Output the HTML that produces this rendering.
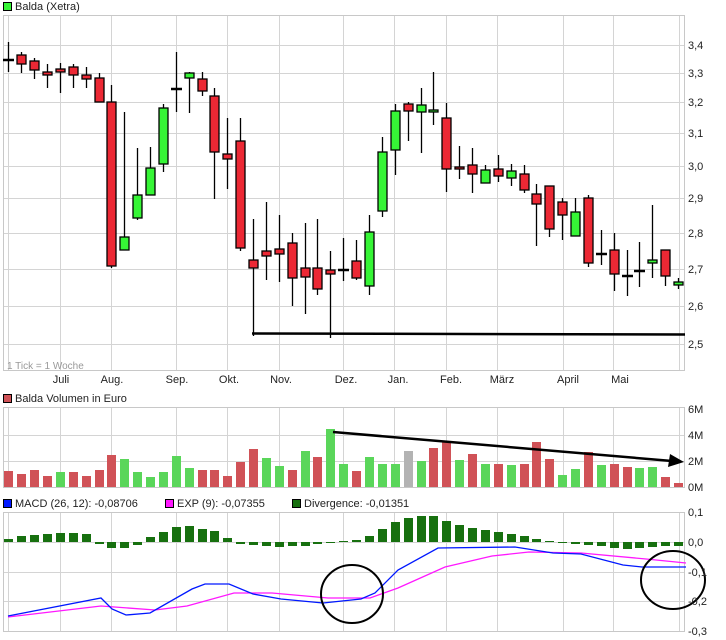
<!DOCTYPE html>
<html><head><meta charset="utf-8"><style>
html,body{margin:0;padding:0;background:#fff;width:726px;height:640px;overflow:hidden}
svg{display:block}
text{font-family:"Liberation Sans",sans-serif;font-size:11px;fill:#222}
</style></head><body>
<svg width="726" height="640" viewBox="0 0 726 640" xmlns="http://www.w3.org/2000/svg">
<!-- title -->
<rect x="3.5" y="2.5" width="8" height="8" fill="#36f536" stroke="#000"/>
<text x="15" y="10" style="font-size:11px">Balda (Xetra)</text>

<!-- PRICE PANEL grid -->
<g stroke="#d4d4d4" stroke-width="1">
<line x1="3" y1="45.5" x2="685" y2="45.5"/><line x1="3" y1="73.5" x2="685" y2="73.5"/>
<line x1="3" y1="102.5" x2="685" y2="102.5"/><line x1="3" y1="133.5" x2="685" y2="133.5"/>
<line x1="3" y1="166.5" x2="685" y2="166.5"/><line x1="3" y1="198.5" x2="685" y2="198.5"/>
<line x1="3" y1="233.5" x2="685" y2="233.5"/><line x1="3" y1="269.5" x2="685" y2="269.5"/>
<line x1="3" y1="306.5" x2="685" y2="306.5"/><line x1="3" y1="344.5" x2="685" y2="344.5"/>
<g id="vg">
<line x1="8.5" y1="15" x2="8.5" y2="371"/><line x1="60.5" y1="15" x2="60.5" y2="371"/>
<line x1="111.5" y1="15" x2="111.5" y2="371"/><line x1="176.5" y1="15" x2="176.5" y2="371"/>
<line x1="227.5" y1="15" x2="227.5" y2="371"/><line x1="279.5" y1="15" x2="279.5" y2="371"/>
<line x1="343.5" y1="15" x2="343.5" y2="371"/><line x1="394.5" y1="15" x2="394.5" y2="371"/>
<line x1="446.5" y1="15" x2="446.5" y2="371"/><line x1="497.5" y1="15" x2="497.5" y2="371"/>
<line x1="563.5" y1="15" x2="563.5" y2="371"/><line x1="613.5" y1="15" x2="613.5" y2="371"/>
<line x1="679.5" y1="15" x2="679.5" y2="371"/>
</g>
</g>
<rect x="3.5" y="15.5" width="681" height="355" fill="none" stroke="#c8c8c8"/>

<!-- candles -->
<g stroke="#000" stroke-width="1.3">
<line x1="8.5" y1="42" x2="8.5" y2="72"/><line x1="21.5" y1="52" x2="21.5" y2="73"/><line x1="34.5" y1="58" x2="34.5" y2="79"/>
<line x1="47.5" y1="64" x2="47.5" y2="88"/><line x1="60.5" y1="63" x2="60.5" y2="93"/><line x1="73.5" y1="64" x2="73.5" y2="88"/>
<line x1="86.5" y1="67" x2="86.5" y2="88"/><line x1="99.5" y1="73" x2="99.5" y2="102"/><line x1="111.5" y1="85" x2="111.5" y2="268"/>
<line x1="124.5" y1="112" x2="124.5" y2="250"/><line x1="137.5" y1="148" x2="137.5" y2="220"/><line x1="150.5" y1="147" x2="150.5" y2="195"/>
<line x1="163.5" y1="104" x2="163.5" y2="172"/><line x1="176.5" y1="52" x2="176.5" y2="112"/><line x1="189.5" y1="72" x2="189.5" y2="113"/>
<line x1="202.5" y1="72" x2="202.5" y2="96"/><line x1="214.5" y1="88" x2="214.5" y2="199"/><line x1="227.5" y1="118" x2="227.5" y2="189"/>
<line x1="240.5" y1="118" x2="240.5" y2="251"/><line x1="253.5" y1="219" x2="253.5" y2="336"/><line x1="266.5" y1="202" x2="266.5" y2="280"/>
<line x1="279.5" y1="215" x2="279.5" y2="282"/><line x1="292.5" y1="233" x2="292.5" y2="306"/><line x1="305.5" y1="223" x2="305.5" y2="314"/>
<line x1="317.5" y1="219" x2="317.5" y2="295"/><line x1="330.5" y1="251" x2="330.5" y2="338"/><line x1="343.5" y1="238" x2="343.5" y2="281"/>
<line x1="356.5" y1="240" x2="356.5" y2="280"/><line x1="369.5" y1="215" x2="369.5" y2="295"/><line x1="382.5" y1="137" x2="382.5" y2="217"/>
<line x1="395.5" y1="104" x2="395.5" y2="175"/><line x1="408.5" y1="102" x2="408.5" y2="141"/><line x1="421.5" y1="88" x2="421.5" y2="153"/>
<line x1="433.5" y1="72" x2="433.5" y2="125"/><line x1="446.5" y1="103" x2="446.5" y2="192"/><line x1="459.5" y1="146" x2="459.5" y2="179"/>
<line x1="472.5" y1="148" x2="472.5" y2="193"/><line x1="485.5" y1="165" x2="485.5" y2="183"/><line x1="498.5" y1="155" x2="498.5" y2="182"/>
<line x1="511.5" y1="164" x2="511.5" y2="186"/><line x1="524.5" y1="165" x2="524.5" y2="193"/><line x1="536.5" y1="184" x2="536.5" y2="246"/>
<line x1="549.5" y1="186" x2="549.5" y2="237"/><line x1="562.5" y1="198" x2="562.5" y2="240"/><line x1="575.5" y1="198" x2="575.5" y2="236"/>
<line x1="588.5" y1="195" x2="588.5" y2="267"/><line x1="601.5" y1="230" x2="601.5" y2="265"/><line x1="614.5" y1="233" x2="614.5" y2="291"/>
<line x1="627.5" y1="250" x2="627.5" y2="296"/><line x1="639.5" y1="242" x2="639.5" y2="287"/><line x1="652.5" y1="205" x2="652.5" y2="278"/>
<line x1="665.5" y1="250" x2="665.5" y2="286"/><line x1="678.5" y1="278" x2="678.5" y2="289"/>
</g>
<g stroke="#000" stroke-width="2.5">
<line x1="3" y1="60" x2="14" y2="60"/><line x1="171" y1="89" x2="182" y2="89"/><line x1="338" y1="270" x2="349" y2="270"/>
<line x1="596" y1="254" x2="607" y2="254"/><line x1="622" y1="276" x2="633" y2="276"/><line x1="634" y1="271" x2="645" y2="271"/>
</g>
<g stroke="#000" stroke-width="1.3" fill="#ec2834">
<rect x="17" y="55" width="9" height="9"/><rect x="30" y="61" width="9" height="9"/><rect x="43" y="72" width="9" height="3"/>
<rect x="56" y="69" width="9" height="3"/><rect x="69" y="67" width="9" height="8"/><rect x="82" y="75" width="9" height="4"/>
<rect x="95" y="78" width="9" height="24"/><rect x="107" y="102" width="9" height="164"/><rect x="198" y="79" width="9" height="12"/>
<rect x="210" y="96" width="9" height="56"/><rect x="223" y="154" width="9" height="5"/><rect x="236" y="141" width="9" height="107"/>
<rect x="249" y="260" width="9" height="8"/><rect x="262" y="251" width="9" height="5"/><rect x="275" y="249" width="9" height="5"/>
<rect x="288" y="243" width="9" height="35"/><rect x="301" y="268" width="9" height="9"/><rect x="313" y="268" width="9" height="21"/>
<rect x="326" y="270" width="9" height="4"/><rect x="352" y="261" width="9" height="17"/><rect x="404" y="104" width="9" height="7"/>
<rect x="442" y="118" width="9" height="51"/><rect x="455" y="167" width="9" height="2"/><rect x="468" y="165" width="9" height="9"/>
<rect x="494" y="169" width="9" height="7"/><rect x="520" y="174" width="9" height="16"/><rect x="532" y="194" width="9" height="10"/>
<rect x="545" y="186" width="9" height="43"/><rect x="558" y="202" width="9" height="13"/><rect x="584" y="198" width="9" height="65"/>
<rect x="610" y="250" width="9" height="24"/><rect x="661" y="250" width="9" height="26"/>
</g>
<g stroke="#000" stroke-width="1.3" fill="#36f536">
<rect x="120" y="237" width="9" height="13"/><rect x="133" y="195" width="9" height="23"/><rect x="146" y="168" width="9" height="27"/>
<rect x="159" y="108" width="9" height="56"/><rect x="185" y="73" width="9" height="5"/><rect x="365" y="232" width="9" height="54"/>
<rect x="378" y="152" width="9" height="59"/><rect x="391" y="111" width="9" height="39"/><rect x="417" y="105" width="9" height="7"/>
<rect x="429" y="110" width="9" height="2"/><rect x="481" y="170" width="9" height="13"/><rect x="507" y="171" width="9" height="7"/>
<rect x="571" y="212" width="9" height="24"/><rect x="648" y="260" width="9" height="3"/><rect x="674" y="282" width="9" height="3"/>
</g>
<line x1="252" y1="333.5" x2="685" y2="334.5" stroke="#000" stroke-width="2.5"/>

<!-- price axis -->
<g>
<text x="688" y="49">3,4</text><text x="688" y="77">3,3</text><text x="688" y="106">3,2</text>
<text x="688" y="137">3,1</text><text x="688" y="170">3,0</text><text x="688" y="202">2,9</text>
<text x="688" y="237">2,8</text><text x="688" y="273">2,7</text><text x="688" y="310">2,6</text>
<text x="688" y="348">2,5</text>
</g>
<text x="7" y="369" style="fill:#999;font-size:10px">1 Tick = 1 Woche</text>
<g text-anchor="middle">
<text x="61" y="383">Juli</text><text x="112" y="383">Aug.</text><text x="177" y="383">Sep.</text>
<text x="229" y="383">Okt.</text><text x="281" y="383">Nov.</text><text x="346" y="383">Dez.</text>
<text x="398" y="383">Jan.</text><text x="451" y="383">Feb.</text><text x="502" y="383">März</text>
<text x="568" y="383">April</text><text x="620" y="383">Mai</text>
</g>

<!-- VOLUME -->
<rect x="3.5" y="394.5" width="8" height="8" fill="#d05257" stroke="#000"/>
<text x="15" y="402">Balda Volumen in Euro</text>
<g stroke="#d4d4d4">
<line x1="3" y1="435.5" x2="685" y2="435.5"/><line x1="3" y1="461.5" x2="685" y2="461.5"/>
<g transform="translate(0,0)">
<line x1="8.5" y1="407" x2="8.5" y2="487"/><line x1="60.5" y1="407" x2="60.5" y2="487"/><line x1="111.5" y1="407" x2="111.5" y2="487"/>
<line x1="176.5" y1="407" x2="176.5" y2="487"/><line x1="227.5" y1="407" x2="227.5" y2="487"/><line x1="279.5" y1="407" x2="279.5" y2="487"/>
<line x1="343.5" y1="407" x2="343.5" y2="487"/><line x1="394.5" y1="407" x2="394.5" y2="487"/><line x1="446.5" y1="407" x2="446.5" y2="487"/>
<line x1="497.5" y1="407" x2="497.5" y2="487"/><line x1="563.5" y1="407" x2="563.5" y2="487"/><line x1="613.5" y1="407" x2="613.5" y2="487"/>
<line x1="679.5" y1="407" x2="679.5" y2="487"/>
</g>
</g>
<rect x="3.5" y="407.5" width="681" height="80" fill="none" stroke="#c8c8c8"/>
<g fill="#d05257">
<rect x="4" y="471" width="9" height="16"/><rect x="17" y="474" width="9" height="13"/><rect x="30" y="470" width="9" height="17"/>
<rect x="43" y="476" width="9" height="11"/><rect x="69" y="472" width="9" height="15"/><rect x="82" y="476" width="9" height="11"/>
<rect x="95" y="470" width="9" height="17"/><rect x="107" y="455" width="9" height="32"/><rect x="198" y="470" width="9" height="17"/>
<rect x="210" y="470" width="9" height="17"/><rect x="223" y="476" width="9" height="11"/><rect x="236" y="462" width="9" height="25"/>
<rect x="249" y="449" width="9" height="38"/><rect x="288" y="470" width="9" height="17"/><rect x="313" y="457" width="9" height="30"/>
<rect x="352" y="471" width="9" height="16"/><rect x="429" y="448" width="9" height="39"/><rect x="442" y="442" width="9" height="45"/>
<rect x="468" y="454" width="9" height="33"/><rect x="494" y="464" width="9" height="23"/><rect x="520" y="464" width="9" height="23"/>
<rect x="532" y="442" width="9" height="45"/><rect x="545" y="459" width="9" height="28"/><rect x="584" y="452" width="9" height="35"/>
<rect x="610" y="464" width="9" height="23"/><rect x="623" y="467" width="9" height="20"/><rect x="661" y="477" width="9" height="10"/>
<rect x="674" y="483" width="9" height="4"/>
</g>
<g fill="#5ad65a">
<rect x="56" y="472" width="9" height="15"/><rect x="120" y="459" width="9" height="28"/><rect x="133" y="472" width="9" height="15"/>
<rect x="146" y="477" width="9" height="10"/><rect x="159" y="472" width="9" height="15"/><rect x="172" y="456" width="9" height="31"/>
<rect x="185" y="468" width="9" height="19"/><rect x="262" y="458" width="9" height="29"/><rect x="275" y="466" width="9" height="21"/>
<rect x="301" y="451" width="9" height="36"/><rect x="326" y="429" width="9" height="58"/><rect x="339" y="464" width="9" height="23"/>
<rect x="365" y="457" width="9" height="30"/><rect x="378" y="464" width="9" height="23"/><rect x="391" y="464" width="9" height="23"/>
<rect x="417" y="461" width="9" height="26"/><rect x="455" y="460" width="9" height="27"/><rect x="481" y="464" width="9" height="23"/>
<rect x="507" y="465" width="9" height="22"/><rect x="558" y="475" width="9" height="12"/><rect x="571" y="469" width="9" height="18"/>
<rect x="597" y="465" width="9" height="22"/><rect x="635" y="468" width="9" height="19"/><rect x="648" y="467" width="9" height="20"/>
</g>
<rect x="404" y="451" width="9" height="36" fill="#b3b3b3"/>
<line x1="333" y1="432" x2="672" y2="461" stroke="#000" stroke-width="2.5"/>
<polygon points="684,462 670,454 668,467" fill="#000"/>
<text x="688" y="413">6M</text><text x="688" y="439">4M</text><text x="688" y="465">2M</text><text x="688" y="491">0M</text>

<!-- MACD -->
<rect x="3.5" y="499.5" width="8" height="8" fill="#0018ff" stroke="#000"/>
<text x="15" y="507">MACD (26, 12): -0,08706</text>
<rect x="165.5" y="499.5" width="8" height="8" fill="#ff18ff" stroke="#000"/>
<text x="177" y="507">EXP (9): -0,07355</text>
<rect x="292.5" y="499.5" width="8" height="8" fill="#17700f" stroke="#000"/>
<text x="304" y="507">Divergence: -0,01351</text>
<g stroke="#d4d4d4">
<line x1="3" y1="542.5" x2="685" y2="542.5"/><line x1="3" y1="572.5" x2="685" y2="572.5"/><line x1="3" y1="601.5" x2="685" y2="601.5"/>
<line x1="8.5" y1="512" x2="8.5" y2="631"/><line x1="60.5" y1="512" x2="60.5" y2="631"/><line x1="111.5" y1="512" x2="111.5" y2="631"/>
<line x1="176.5" y1="512" x2="176.5" y2="631"/><line x1="227.5" y1="512" x2="227.5" y2="631"/><line x1="279.5" y1="512" x2="279.5" y2="631"/>
<line x1="343.5" y1="512" x2="343.5" y2="631"/><line x1="394.5" y1="512" x2="394.5" y2="631"/><line x1="446.5" y1="512" x2="446.5" y2="631"/>
<line x1="497.5" y1="512" x2="497.5" y2="631"/><line x1="563.5" y1="512" x2="563.5" y2="631"/><line x1="613.5" y1="512" x2="613.5" y2="631"/>
<line x1="679.5" y1="512" x2="679.5" y2="631"/>
</g>
<rect x="3.5" y="512.5" width="681" height="119" fill="none" stroke="#c8c8c8"/>
<g fill="#17700f">
<rect x="4" y="539" width="9" height="3"/><rect x="17" y="536" width="9" height="6"/><rect x="30" y="535" width="9" height="7"/>
<rect x="43" y="534" width="9" height="8"/><rect x="56" y="533" width="9" height="9"/><rect x="69" y="533" width="9" height="9"/>
<rect x="82" y="534" width="9" height="8"/><rect x="95" y="542" width="9" height="2"/><rect x="107" y="542" width="9" height="6"/>
<rect x="120" y="542" width="9" height="6"/><rect x="133" y="542" width="9" height="3"/><rect x="146" y="537" width="9" height="5"/>
<rect x="159" y="532" width="9" height="10"/><rect x="172" y="527" width="9" height="15"/><rect x="185" y="526" width="9" height="16"/>
<rect x="198" y="529" width="9" height="13"/><rect x="210" y="531" width="9" height="11"/><rect x="223" y="538" width="9" height="4"/>
<rect x="236" y="542" width="9" height="2"/><rect x="249" y="542" width="9" height="3"/><rect x="262" y="542" width="9" height="4"/>
<rect x="275" y="542" width="9" height="5"/><rect x="288" y="542" width="9" height="4"/><rect x="301" y="542" width="9" height="4"/>
<rect x="313" y="542" width="9" height="2"/><rect x="326" y="542" width="9" height="1"/><rect x="339" y="541" width="9" height="1"/>
<rect x="352" y="540" width="9" height="2"/><rect x="365" y="536" width="9" height="6"/><rect x="378" y="529" width="9" height="13"/>
<rect x="391" y="522" width="9" height="20"/><rect x="404" y="518" width="9" height="24"/><rect x="417" y="516" width="9" height="26"/>
<rect x="429" y="516" width="9" height="26"/><rect x="442" y="521" width="9" height="21"/><rect x="455" y="525" width="9" height="17"/>
<rect x="468" y="528" width="9" height="14"/><rect x="481" y="530" width="9" height="12"/><rect x="494" y="532" width="9" height="10"/>
<rect x="507" y="534" width="9" height="8"/><rect x="520" y="536" width="9" height="6"/><rect x="532" y="539" width="9" height="3"/>
<rect x="545" y="541" width="9" height="1"/><rect x="558" y="542" width="9" height="1"/><rect x="571" y="542" width="9" height="2"/>
<rect x="584" y="542" width="9" height="3"/><rect x="597" y="542" width="9" height="4"/><rect x="610" y="542" width="9" height="6"/>
<rect x="623" y="542" width="9" height="7"/><rect x="635" y="542" width="9" height="6"/><rect x="648" y="542" width="9" height="5"/>
<rect x="661" y="542" width="9" height="4"/><rect x="674" y="542" width="9" height="4"/>
</g>
<polyline fill="none" stroke="#ff18ff" stroke-width="1.3" points="8,617 101,606 155,610 187,606 234,593 272,593 328,598 370,598 398,588 445,567 492,556 529,552 581,553 646,559 686,563"/>
<polyline fill="none" stroke="#0018ff" stroke-width="1.3" points="8,616 101,598 112,609 126,615 150,613 192,589 205,584 229,584 253,594 281,599 323,603 361,599 375,593 398,570 438,548 515,547 553,553 581,554 623,565 642,567 686,567"/>
<ellipse cx="352" cy="594" rx="31" ry="29" fill="none" stroke="#000" stroke-width="2"/>
<ellipse cx="673" cy="580" rx="32" ry="29" fill="none" stroke="#000" stroke-width="2"/>
<text x="688" y="516">0,1</text><text x="688" y="546">0,0</text><text x="688" y="576">-0,1</text>
<text x="688" y="605">-0,2</text><text x="688" y="635">-0,3</text>
</svg>
</body></html>
